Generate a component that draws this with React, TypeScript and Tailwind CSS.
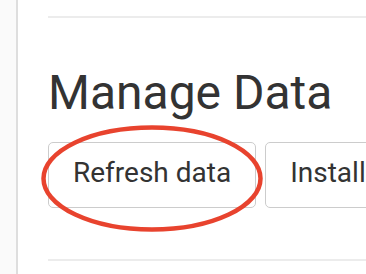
export default function App() {
  return (
    <div
      className="relative flex h-[274px] w-[366px] overflow-hidden bg-white text-[#333333]"
      style={{ fontFamily: "Roboto, 'Liberation Sans', sans-serif" }}
    >
      <aside className="w-[18px] shrink-0 border-r-2 border-[#dedede] bg-[#fafafa]" />

      <main className="flex min-w-[600px] flex-col pl-[30px]">
        <hr className="mt-4 border-t-2 border-[#ececec]" />

        <h1 className="mt-[46px] text-[48px] leading-[1.2] font-normal">Manage Data</h1>

        <div className="mt-[20px] flex gap-[9px]">
          <button className="flex h-[66px] items-center rounded-[5px] border border-[#cccccc] px-[24px] pb-[3px] text-[28px] leading-[1.2]">
            Refresh data
          </button>
          <button className="flex h-[66px] items-center rounded-[5px] border border-[#cccccc] px-[24px] pb-[3px] text-[28px] leading-[1.2] whitespace-nowrap">
            Install sample data
          </button>
        </div>

        <hr className="mt-[51px] border-t-2 border-[#ececec]" />
      </main>

      <svg className="pointer-events-none absolute top-0 left-0" width="366" height="274">
        <ellipse cx="152" cy="178.5" rx="108.5" ry="51" fill="none" stroke="#e8432e" strokeWidth="4.5" />
      </svg>
    </div>
  );
}
